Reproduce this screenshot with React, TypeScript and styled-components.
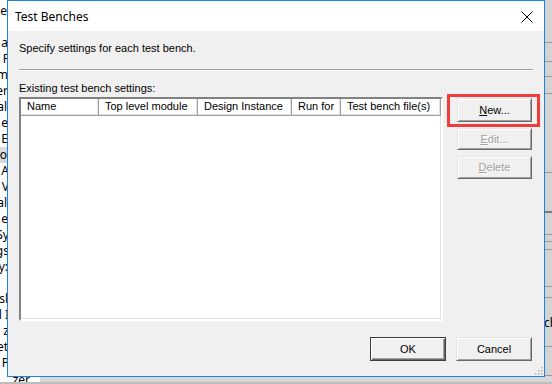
import React from "react";
import styled, { createGlobalStyle } from "styled-components";

const Global = createGlobalStyle`
  html, body { margin: 0; padding: 0; background: #ffffff; overflow: hidden; }
  body { width: 552px; height: 384px; }
  * { box-sizing: border-box; }
`;

const Desktop = styled.div`
  position: relative;
  width: 552px;
  height: 384px;
  overflow: hidden;
  display: flex;
  flex-direction: column;
  font-family: "Liberation Sans", Arial, sans-serif;
  background: #dcdcdc;
`;

const Workspace = styled.div`
  flex: 1;
  display: flex;
  min-height: 0;
`;

const LeftPane = styled.div`
  width: 40px;
  flex: none;
  background: #ffffff;
  display: flex;
  flex-direction: column;
  padding-top: 3px;
`;

const TreeRow = styled.div<{ $end: number; $hl?: boolean }>`
  height: 16px;
  flex: none;
  line-height: 16px;
  font-size: 12px;
  color: #000;
  white-space: nowrap;
  overflow: hidden;
  display: flex;
  justify-content: flex-end;
  padding-right: ${(p) => 40 - p.$end}px;
  background: ${(p) => (p.$hl ? "#d9d9d9" : "transparent")};
  font-family: "Noto Sans", "Liberation Sans", sans-serif;
`;

const Middle = styled.div`
  flex: 1;
  background: #dcdcdc;
`;

const RightStrip = styled.div`
  width: 8px;
  flex: none;
  display: flex;
  flex-direction: column;
  background: #d0d0d0;
`;

const StripSeg = styled.div<{ $h: number; $dark?: boolean }>`
  height: ${(p) => p.$h}px;
  flex: none;
  border-bottom: ${(p) => (p.$dark ? "2px solid #7a7a7a" : "1px solid #999999")};
  background: #d3d3d3;
  font-size: 12px;
  line-height: ${(p) => p.$h}px;
  white-space: nowrap;
  overflow: hidden;
  font-family: "Noto Sans", "Liberation Sans", sans-serif;
`;

const BottomBar = styled.div`
  height: 8px;
  flex: none;
  display: flex;
  background: #d8d8d8;
  border-bottom: 2px solid #bdbdbd;
`;

const BottomLabel = styled.div`
  width: 40px;
  background: #ffffff;
  font-family: "Noto Sans", "Liberation Sans", sans-serif;
  font-size: 12px;
  line-height: 6px;
  padding-top: 1px;
  overflow: hidden;
  white-space: nowrap;
  text-align: right;
  padding-right: 10px;
`;

/* Dialog window */
const Dialog = styled.div`
  position: absolute;
  left: 7px;
  top: 0;
  width: 538px;
  height: 377px;
  border: 1px solid #1c84dc;
  background: #f0f0f0;
  display: flex;
  flex-direction: column;
`;

const TitleBar = styled.div`
  height: 30px;
  background: #ffffff;
  display: flex;
  align-items: center;
  padding-left: 7px;
  padding-right: 11px;
  flex: none;
`;

const Title = styled.div`
  flex: 1;
  font-family: "Noto Sans", "Liberation Sans", sans-serif;
  font-size: 12px;
  color: #000;
  padding-top: 1px;
`;

const CloseBtn = styled.div`
  width: 12px;
  height: 12px;
  display: flex;
  margin-top: 1px;
`;

const Body = styled.div`
  flex: 1;
  display: flex;
  flex-direction: column;
  padding: 10px 11px 0 11px;
  font-size: 11px;
  color: #000;
`;

const Text = styled.div`
  height: 14px;
  line-height: 14px;
  font-size: 11px;
  white-space: nowrap;
`;

const Separator = styled.div`
  margin-top: 14px;
  height: 2px;
  border-top: 1px solid #a0a0a0;
  border-bottom: 1px solid #ffffff;
`;

const Label = styled(Text)`
  margin-top: 10px;
`;

const MainRow = styled.div`
  margin-top: 2px;
  display: flex;
  height: 224px;
`;

const ListBox = styled.div`
  width: 424px;
  height: 224px;
  background: #ffffff;
  border-style: solid;
  border-width: 2px;
  border-color: #828282 #ffffff #ffffff #828282;
  box-shadow: inset -1px -1px 0 #e3e3e3;
  display: flex;
  flex-direction: column;
`;

const HeaderRow = styled.div`
  display: flex;
  height: 17px;
  flex: none;
`;

const HeaderCell = styled.div<{ $w: number }>`
  width: ${(p) => p.$w}px;
  flex: none;
  height: 17px;
  line-height: 15px;
  padding-left: 6px;
  font-size: 11px;
  white-space: nowrap;
  overflow: hidden;
  background: #ffffff;
  border-right: 1px solid #a0a0a0;
  border-bottom: 1px solid #a0a0a0;
  box-shadow: inset -1px -1px 0 #e3e3e3, inset 1px 1px 0 #ffffff;
`;

const SideButtons = styled.div`
  margin-left: 14px;
  padding-top: 1px;
  display: flex;
  flex-direction: column;
  gap: 6px;
`;

const BtnWrap = styled.div`
  position: relative;
`;

const Button = styled.div<{ $w?: number; $h?: number; $disabled?: boolean; $default?: boolean }>`
  width: ${(p) => p.$w ?? 75}px;
  height: ${(p) => p.$h ?? 23}px;
  background: #f0f0f0;
  display: flex;
  align-items: center;
  justify-content: center;
  font-size: 11px;
  color: ${(p) => (p.$disabled ? "#a0a0a0" : "#000")};
  text-shadow: ${(p) => (p.$disabled ? "1px 1px 0 #ffffff" : "none")};
  border-style: solid;
  border-width: 1px;
  border-color: ${(p) =>
    p.$default ? "#3c3c3c" : "#e3e3e3 #696969 #696969 #e3e3e3"};
  box-shadow: ${(p) =>
    p.$default
      ? "inset 1px 1px 0 #ffffff, inset -1px -1px 0 #696969, inset -2px -2px 0 #a0a0a0"
      : "inset 1px 1px 0 #ffffff, inset -1px -1px 0 #a0a0a0"};
  padding-bottom: 1px;
`;

const U = styled.span`
  text-decoration: underline;
  text-underline-offset: 1px;
`;

const Highlight = styled.div`
  position: absolute;
  left: -10px;
  top: -4px;
  width: 93px;
  height: 33px;
  border: 3px solid #f23c3c;
  pointer-events: none;
`;

const Footer = styled.div`
  margin-top: 16px;
  display: flex;
  justify-content: flex-end;
  gap: 10px;
  padding-right: 1px;
`;

const Grip = styled.svg`
  position: absolute;
  right: 1px;
  bottom: 1px;
`;

const columns: [string, number][] = [
  ["Name", 78],
  ["Top level module", 99],
  ["Design Instance", 94],
  ["Run for", 49],
  ["Test bench file(s)", 100],
];

const treeRows: { t: string; end: number; hl?: boolean }[] = [
  { t: "e", end: 7 },
  { t: "", end: 8 },
  { t: "a", end: 8 },
  { t: "F", end: 9 },
  { t: "m", end: 8 },
  { t: "er", end: 8 },
  { t: "al", end: 7 },
  { t: "e", end: 8 },
  { t: "E", end: 8 },
  { t: "o", end: 7, hl: true },
  { t: "A", end: 9 },
  { t: "V", end: 9 },
  { t: "al", end: 7 },
  { t: "e", end: 8 },
  { t: "Sy", end: 9 },
  { t: "gs", end: 9 },
  { t: "y:", end: 8 },
  { t: "", end: 8 },
  { t: "sl", end: 8 },
  { t: "l I", end: 9 },
  { t: "z", end: 9 },
  { t: "et", end: 8 },
  { t: "P", end: 9 },
];

const stripSegs: { h: number; dark?: boolean; t?: string }[] = [
  { h: 43 },
  { h: 19 },
  { h: 15 },
  { h: 17 },
  { h: 79 },
  { h: 40, dark: true },
  { h: 22 },
  { h: 7 },
  { h: 8 },
  { h: 37 },
  { h: 11 },
  { h: 49, t: "ch" },
  { h: 29 },
];

export default function App() {
  return (
    <>
      <Global />
      <Desktop>
        <Workspace>
          <LeftPane>
            {treeRows.map((r, i) => (
              <TreeRow key={i} $end={r.end} $hl={r.hl}>
                {r.t}
              </TreeRow>
            ))}
          </LeftPane>
          <Middle />
          <RightStrip>
            {stripSegs.map((s, i) => (
              <StripSeg key={i} $h={s.h} $dark={s.dark}>
                {s.t ?? ""}
              </StripSeg>
            ))}
          </RightStrip>
        </Workspace>
        <BottomBar>
          <BottomLabel>zer</BottomLabel>
        </BottomBar>

        <Dialog>
          <TitleBar>
            <Title>Test Benches</Title>
            <CloseBtn>
              <svg width="12" height="12" viewBox="0 0 12 12">
                <path d="M0.5 0.5 L11.5 11.5 M11.5 0.5 L0.5 11.5" stroke="#000" strokeWidth="1" fill="none" />
              </svg>
            </CloseBtn>
          </TitleBar>
          <Body>
            <Text>Specify settings for each test bench.</Text>
            <Separator />
            <Label>Existing test bench settings:</Label>
            <MainRow>
              <ListBox>
                <HeaderRow>
                  {columns.map(([name, w]) => (
                    <HeaderCell key={name} $w={w}>
                      {name}
                    </HeaderCell>
                  ))}
                </HeaderRow>
              </ListBox>
              <SideButtons>
                <BtnWrap>
                  <Button $h={24}>
                    <span>
                      <U>N</U>ew...
                    </span>
                  </Button>
                  <Highlight />
                </BtnWrap>
                <Button $disabled $h={22}>
                  <span>
                    <U>E</U>dit...
                  </span>
                </Button>
                <Button $disabled>
                  <span>
                    <U>D</U>elete
                  </span>
                </Button>
              </SideButtons>
            </MainRow>
            <Footer>
              <Button $w={76} $h={24} $default>
                OK
              </Button>
              <Button $w={76} $h={24}>Cancel</Button>
            </Footer>
          </Body>
          <Grip width="9" height="9" viewBox="0 0 9 9">
            {[
              [7, 1], [7, 4], [4, 4], [7, 7], [4, 7], [1, 7],
            ].map(([x, y], i) => (
              <rect key={i} x={x} y={y} width="1.5" height="1.5" fill="#a8a8a8" />
            ))}
          </Grip>
        </Dialog>
      </Desktop>
    </>
  );
}
